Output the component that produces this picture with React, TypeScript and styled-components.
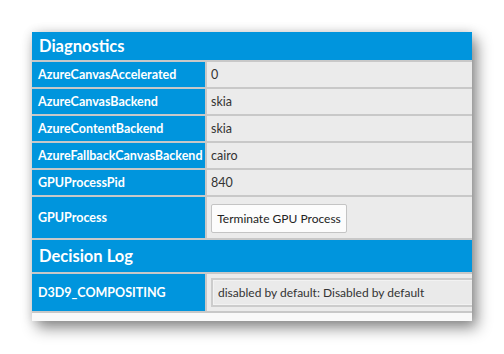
import React from 'react'
import styled, { createGlobalStyle } from 'styled-components'

const GlobalStyle = createGlobalStyle`
  html, body {
    margin: 0;
    padding: 0;
    background: #ffffff;
  }
  body {
    font-family: Lato, 'Open Sans', sans-serif;
  }
`

const Page = styled.div`
  width: 504px;
  height: 354px;
  padding: 32px 0 0 32px;
  box-sizing: border-box;
  overflow: hidden;
`

const Panel = styled.div`
  width: 440px;
  height: 289px;
  display: flex;
  flex-direction: column;
  gap: 2px;
  background: #c8c8c8;
  overflow: hidden;
  box-shadow: 5px 7px 14px rgba(0, 0, 0, 0.45), 0 0 10px rgba(0, 0, 0, 0.12);
`

const SectionHeader = styled.div<{ $height: number }>`
  height: ${(p) => p.$height}px;
  flex: none;
  display: flex;
  align-items: center;
  padding-left: 7px;
  background: #0095dd;
  color: #ffffff;
  font-size: 16.5px;
  font-weight: 700;
`

const Row = styled.div<{ $height: number }>`
  height: ${(p) => p.$height}px;
  flex: none;
  display: grid;
  grid-template-columns: 173px 1fr;
  column-gap: 2px;
`

const Label = styled.div`
  display: flex;
  align-items: center;
  padding-left: 6px;
  background: #0095dd;
  color: #ffffff;
  font-size: 12.5px;
  font-weight: 700;
  white-space: nowrap;
  overflow: hidden;
`

const Value = styled.div`
  display: flex;
  align-items: center;
  padding-left: 4px;
  background: #ebebeb;
  color: #333333;
  font-size: 12.5px;
  white-space: nowrap;
  min-width: 0;
`

const Button = styled.button`
  height: 29px;
  width: 136px;
  padding: 0;
  margin-top: 1px;
  border: 1px solid #c4c4c4;
  border-radius: 2px;
  background: #fcfcfc;
  color: #222222;
  font-family: inherit;
  font-size: 12px;
`

const LogBox = styled.div`
  height: 29px;
  width: 320px;
  flex: none;
  box-sizing: border-box;
  display: flex;
  align-items: center;
  padding-left: 5px;
  border: 2px solid #cccccc;
  box-shadow: inset 0 0 0 1px #f2f2f2;
  background: #eaeaea;
  color: #333333;
  font-size: 12px;
`

const Footer = styled.div`
  flex: 1;
  background: #f9f9f9;
`

const diagnostics: [string, string][] = [
  ['AzureCanvasAccelerated', '0'],
  ['AzureCanvasBackend', 'skia'],
  ['AzureContentBackend', 'skia'],
  ['AzureFallbackCanvasBackend', 'cairo'],
  ['GPUProcessPid', '840'],
]

export default function App() {
  return (
    <Page>
      <GlobalStyle />
      <Panel>
        <SectionHeader $height={28}>Diagnostics</SectionHeader>
        {diagnostics.map(([name, value]) => (
          <Row key={name} $height={25}>
            <Label>{name}</Label>
            <Value>{value}</Value>
          </Row>
        ))}
        <Row $height={41}>
          <Label>GPUProcess</Label>
          <Value>
            <Button>Terminate GPU Process</Button>
          </Value>
        </Row>
        <SectionHeader $height={32}>Decision Log</SectionHeader>
        <Row $height={37}>
          <Label>D3D9_COMPOSITING</Label>
          <Value>
            <LogBox>disabled by default: Disabled by default</LogBox>
          </Value>
        </Row>
        <Footer />
      </Panel>
    </Page>
  )
}
